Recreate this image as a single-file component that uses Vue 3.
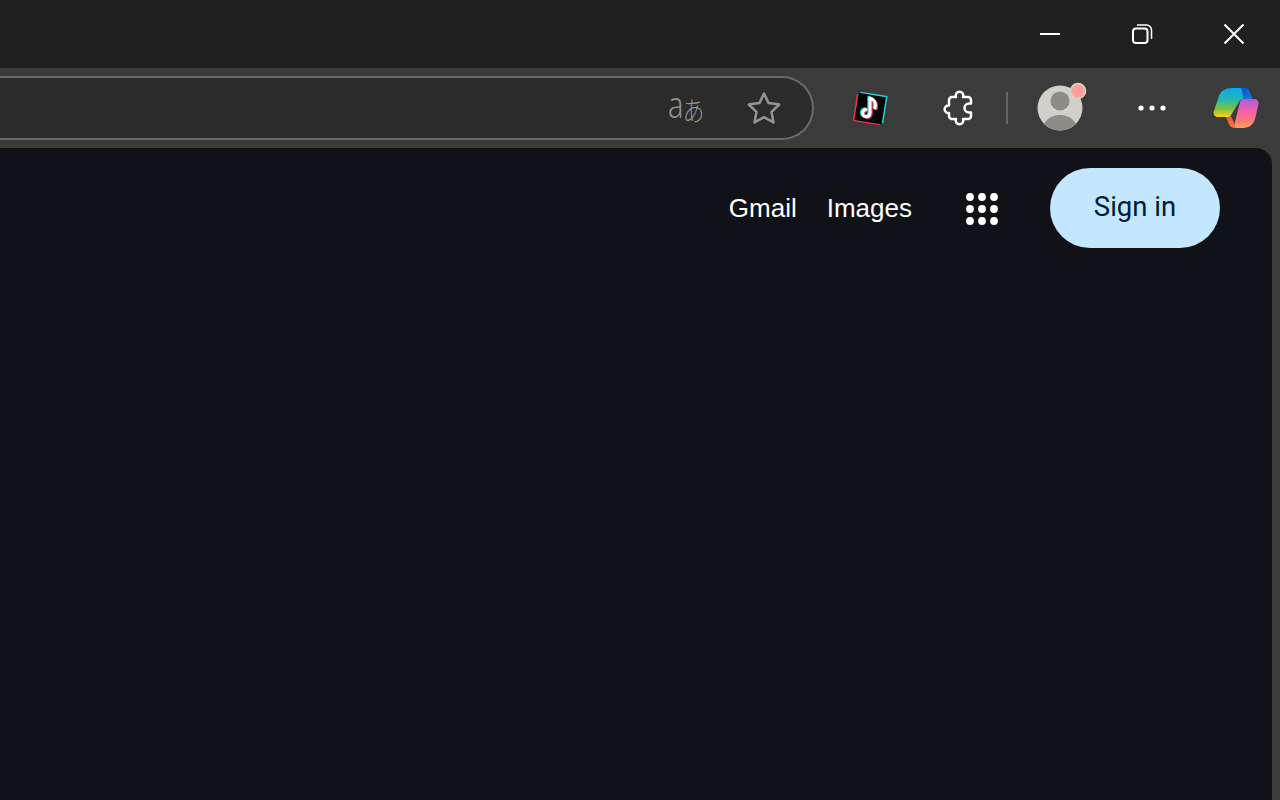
<script setup>
const dots = []
for (let r = 0; r < 3; r++) for (let c = 0; c < 3; c++) dots.push({ x: 4 + c * 12, y: 4 + r * 12 })
</script>

<template>
  <div class="window">
    <header class="titlebar">
      <button class="cap">
        <svg width="20" height="2" viewBox="0 0 20 2"><rect width="20" height="2" fill="#fff" /></svg>
      </button>
      <button class="cap">
        <svg width="22" height="22" viewBox="0 0 22 22" fill="none" stroke="#fff" stroke-width="2">
          <rect x="2" y="5.500" width="14.500" height="14.500" rx="3" />
          <path d="M6 2h9.500a5 5 0 0 1 5 5v9" stroke-width="1.500" />
        </svg>
      </button>
      <button class="cap">
        <svg width="22" height="22" viewBox="0 0 22 22" fill="none" stroke="#fff" stroke-width="2">
          <path d="M1.500 1.500l19 19M20.500 1.500l-19 19" />
        </svg>
      </button>
    </header>

    <div class="toolbar">
      <div class="omnibox">
        <span class="translate"><span class="latin">a</span><span class="kana">あ</span></span>
        <svg class="star" width="36" height="34" viewBox="0 0 36 34" fill="none" stroke="#949494" stroke-width="2.500" stroke-linejoin="round">
          <path d="M18 2.500l4.600 9.600 10.700 1.400-7.800 7.300 2 10.600-9.500-5.200-9.500 5.200 2-10.600-7.800-7.300 10.700-1.400z" />
        </svg>
      </div>

      <div class="slot slot-tiktok">
        <svg width="36" height="36" viewBox="0 0 36 36">
          <g transform="rotate(9 18 18)">
            <rect x="6" y="3.500" width="27.500" height="27.500" fill="#25d5de" />
            <rect x="3" y="6" width="27.500" height="27.500" fill="#f0305f" />
            <rect x="4.500" y="4.800" width="27.500" height="27.500" fill="#050505" />
          </g>
          <g fill="none" stroke-width="3" stroke-linecap="round">
            <path d="M18 8v15a3.700 3.700 0 1 1-4-3.600M18 8c3.500 1 6.500 4.500 5 10" stroke="#25d5de" transform="translate(-1.200 -.6)" />
            <path d="M18 8v15a3.700 3.700 0 1 1-4-3.600M18 8c3.500 1 6.500 4.500 5 10" stroke="#f0305f" transform="translate(1.200 .8)" />
            <path d="M18 8v15a3.700 3.700 0 1 1-4-3.600M18 8c3.500 1 6.500 4.500 5 10" stroke="#fff" />
          </g>
        </svg>
      </div>

      <div class="slot slot-puzzle">
        <svg width="32" height="36" viewBox="0 -1 32 36" fill="none" stroke="#fff" stroke-width="2.500" stroke-linejoin="round">
          <path d="M10 6h4a3.800 3.800 0 1 1 7 0h5a3 3 0 0 1 3 3v3.500h-2a4.500 4.500 0 0 0 0 9h2V25a3 3 0 0 1-3 3h-5a3.800 3.800 0 1 1-7 0h-4a3 3 0 0 1-3-3v-3a3.800 3.800 0 1 1 0-7.500V9a3 3 0 0 1 3-3z" />
        </svg>
      </div>

      <div class="divider"></div>

      <div class="slot slot-avatar">
        <svg width="60" height="54" viewBox="0 0 60 54">
          <defs>
            <clipPath id="avatar-clip"><circle cx="30" cy="27" r="22.500" /></clipPath>
          </defs>
          <circle cx="30" cy="27" r="22.500" fill="#d1d0ca" />
          <circle cx="30" cy="20" r="9.500" fill="#8f8c87" />
          <ellipse cx="30" cy="48" rx="17" ry="14" fill="#8f8c87" clip-path="url(#avatar-clip)" />
          <circle cx="48" cy="10" r="7.500" fill="#ff9f99" stroke="#d6d3cd" stroke-width="1.600" />
        </svg>
      </div>

      <div class="slot slot-more">
        <svg width="28" height="6" viewBox="0 0 28 6" fill="#fff">
          <circle cx="3" cy="3" r="2.600" /><circle cx="14" cy="3" r="2.600" /><circle cx="25" cy="3" r="2.600" />
        </svg>
      </div>

      <div class="slot slot-copilot">
        <svg width="46" height="42" viewBox="0 0 46 42">
          <defs>
            <linearGradient id="cop-left" x1="0" y1="0" x2="0" y2="1">
              <stop offset="0" stop-color="#0aa8f2" />
              <stop offset=".4" stop-color="#26b9b0" />
              <stop offset=".72" stop-color="#7fc23c" />
              <stop offset="1" stop-color="#ffcf1f" />
            </linearGradient>
            <linearGradient id="cop-right" x1="0" y1="0" x2="0" y2="1">
              <stop offset="0" stop-color="#b45be0" />
              <stop offset=".45" stop-color="#f562a8" />
              <stop offset=".8" stop-color="#fb7f6d" />
              <stop offset="1" stop-color="#ffa858" />
            </linearGradient>
            <linearGradient id="cop-dark" x1="0" y1="0" x2="1" y2="1">
              <stop offset="0" stop-color="#0b4fc4" />
              <stop offset="1" stop-color="#1a78e0" />
            </linearGradient>
            <linearGradient id="cop-red" x1="0" y1="0" x2="1" y2="1">
              <stop offset="0" stop-color="#f0503a" />
              <stop offset="1" stop-color="#ff7d3c" />
            </linearGradient>
          </defs>
          <path d="M20 1h10c4 0 6 2 7 5l2 6h-9c-2 0-3 1-4 3l-8 13c-.5 1.500-1.500 2-3 2H5c-3 0-5-2.500-4.200-5.500L6 9C7.500 4 12 1 20 1z" fill="url(#cop-left)" />
          <path d="M28 1h2c4 0 6 2 7 5l2 6h-9c0-5-1-9-2-11z" fill="url(#cop-dark)" />
          <path d="M13 30h5.500l3 7c1 2.500 2.500 4 4.500 4h-4c-4 0-6-3-7-6z" fill="url(#cop-red)" />
          <path d="M30 12h11c3 0 5 2 4.500 5L42 32c-1 5-6 9-12 9h-4c-3 0-5-2-4-6l5-20c.5-2 1.500-3 3-3z" fill="url(#cop-right)" />
        </svg>
      </div>
    </div>

    <div class="viewport">
      <main class="page">
        <nav class="topnav">
          <a class="link link-gmail">Gmail</a>
          <a class="link">Images</a>
          <svg class="apps" width="32" height="32" viewBox="0 0 32 32" fill="#fff">
            <circle v-for="(d, i) in dots" :key="i" :cx="d.x" :cy="d.y" r="3.900" />
          </svg>
          <button class="signin">Sign in</button>
        </nav>
      </main>
    </div>
  </div>
</template>

<style>
html, body { margin: 0; height: 100%; overflow: hidden; background: #3b3b3b; }
</style>

<style scoped>
.window {
  width: 1280px;
  height: 800px;
  display: flex;
  flex-direction: column;
  background: #3b3b3b;
  font-family: "Liberation Sans", Arial, sans-serif;
}
.titlebar {
  height: 68px;
  flex: none;
  background: #202020;
  display: flex;
  justify-content: flex-end;
}
.cap {
  width: 92px;
  height: 68px;
  padding: 0;
  border: 0;
  background: none;
  display: flex;
  align-items: center;
  justify-content: center;
}
.toolbar {
  height: 80px;
  flex: none;
  display: flex;
  align-items: center;
}
.omnibox {
  width: 814px;
  height: 64px;
  box-sizing: border-box;
  flex: none;
  display: flex;
  align-items: center;
  justify-content: flex-end;
  background: #2b2b2b;
  border: 2px solid #6a6a6a;
  border-left: 0;
  border-radius: 0 32px 32px 0;
  padding-right: 30px;
}
.translate {
  display: flex;
  align-items: baseline;
  color: #949494;
  margin: 0 42px 8px 0;
  line-height: 1;
}
.latin {
  display: inline-block;
  font: 300 36px "Noto Sans", sans-serif;
  transform: scaleX(.8);
  margin: 0 -3px 0 -2px;
}
.kana {
  display: inline-block;
  font: 300 27px "Noto Sans CJK JP", sans-serif;
  transform: scale(.8, 1) translateY(3px);
  margin: 0 -3px 0 -2px;
}
.slot {
  height: 80px;
  flex: none;
  display: flex;
  align-items: center;
  justify-content: center;
}
.slot-tiktok { width: 88px; margin-left: 12px; }
.slot-puzzle { width: 88px; }
.divider { width: 2px; height: 32px; background: #626262; margin-left: 4px; flex: none; }
.slot-avatar { width: 92px; margin-left: 6px; }
.slot-more { width: 92px; }
.slot-copilot { width: 76px; }
.viewport {
  flex: 1;
  display: flex;
  padding-right: 8px;
  min-height: 0;
}
.page {
  flex: 1;
  background: #101218;
  border-top-right-radius: 16px;
}
.topnav {
  display: flex;
  align-items: center;
  justify-content: flex-end;
  padding: 20px 52px 0 0;
  height: 80px;
}
.link {
  color: #fff;
  font-size: 26px;
  line-height: 32px;
  margin-right: 31px;
}
.link-gmail { margin-right: 30px; }
.apps { margin: 1px 52px 0 23px; flex: none; }
.signin {
  width: 170px;
  height: 80px;
  border: 0;
  border-radius: 40px;
  background: #c2e7ff;
  color: #001d35;
  font: 400 27.5px Roboto, "Liberation Sans", sans-serif;
  padding: 0 0 4px;
}
</style>
